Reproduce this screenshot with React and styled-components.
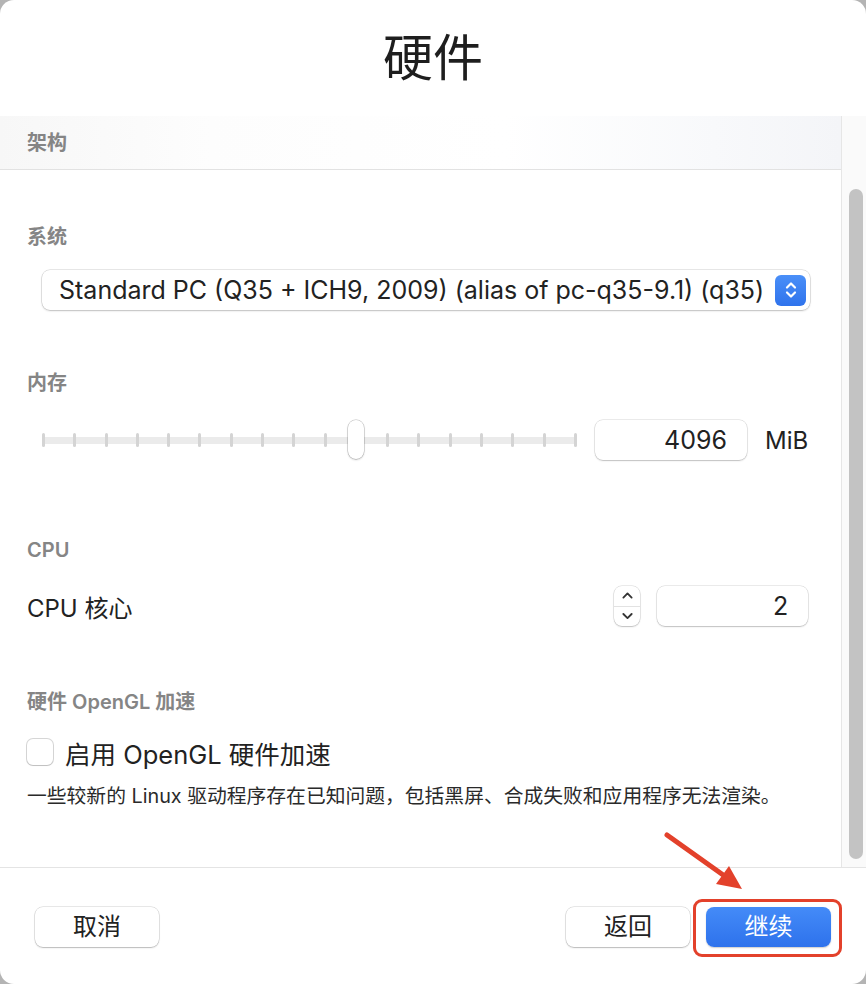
import React from "react";
import styled, { createGlobalStyle } from "styled-components";

const Global = createGlobalStyle`
  html, body { margin: 0; padding: 0; background: #b4b4b4; }
  body { font-family: "Inter", "Noto Sans CJK SC", sans-serif; color: #222; }
  * { box-sizing: border-box; }
`;

const Window = styled.div`
  position: relative;
  width: 866px;
  height: 984px;
  background: #fff;
  border-radius: 14px;
  overflow: hidden;
  display: flex;
  flex-direction: column;
`;

const TitleBar = styled.div`
  height: 116px;
  display: flex;
  align-items: center;
  justify-content: center;
  padding-bottom: 8px;
`;

const Title = styled.h1`
  margin: 0;
  font-family: "Noto Sans CJK SC", sans-serif;
  font-size: 50px;
  font-weight: 400;
  color: #1e1e1e;
  line-height: 1;
`;

const ScrollArea = styled.div`
  height: 752px;
  display: flex;
  border-bottom: 1px solid #e4e4e4;
`;

const Content = styled.div`
  flex: 1;
  display: flex;
  flex-direction: column;
`;

const Track = styled.div`
  width: 26px;
  border-left: 1px solid #e6e6e6;
  background: #fafafa;
  display: flex;
  flex-direction: column;
  padding: 73px 3px 8px 7px;
`;

const Thumb = styled.div`
  flex: 1;
  border-radius: 8px;
  background: #c3c3c3;
`;

const Band = styled.div`
  height: 54px;
  display: flex;
  align-items: center;
  padding-left: 27px;
  border-bottom: 1px solid #e2e2e2;
  background: linear-gradient(90deg, #f7f7f7 0%, #fdfdfd 25%, #ffffff 60%, #f8f9fb 85%, #f4f5f8 100%);
`;

const SectionLabel = styled.div`
  font-size: 20px;
  font-weight: 600;
  color: #858585;
  line-height: 28px;
  padding-left: ${(p) => (p.$inBand ? 0 : 27)}px;
  margin-top: ${(p) => p.$mt || 0}px;
`;

const Select = styled.div`
  margin: 19px 31px 0 42px;
  height: 40px;
  border-radius: 8px;
  background: #fff;
  box-shadow: 0 0 0 0.5px rgba(0,0,0,0.18), 0 1px 2px rgba(0,0,0,0.18);
  display: flex;
  align-items: center;
  justify-content: space-between;
  padding: 0 4px 0 17px;
  font-size: 25px;
  color: #222;
  white-space: nowrap;
`;

const BlueStepper = styled.div`
  width: 31px;
  height: 31px;
  border-radius: 6px;
  background: linear-gradient(#4a8ff8, #2f73ec);
  display: flex;
  align-items: center;
  justify-content: center;
`;

const Row = styled.div`
  display: flex;
  align-items: center;
  margin-top: ${(p) => p.$mt}px;
  padding-left: ${(p) => p.$pl}px;
  padding-right: 33px;
  height: 40px;
`;

const Slider = styled.div`
  position: relative;
  width: 535px;
  height: 40px;
  display: flex;
  align-items: center;
`;

const SliderTrack = styled.div`
  flex: 1;
  height: 7px;
  background: #ebebeb;
  border-radius: 3px;
  display: flex;
  justify-content: space-between;
  align-items: center;
`;

const Tick = styled.div`
  width: 3px;
  height: 14px;
  border-radius: 2px;
  background: #d4d4d4;
`;

const SliderThumb = styled.div`
  position: absolute;
  top: 0;
  width: 16px;
  height: 39px;
  border-radius: 8px;
  background: #fff;
  box-shadow: 0 0 0 0.5px rgba(0,0,0,0.25), 0 1px 2px rgba(0,0,0,0.2);
`;

const NumField = styled.div`
  width: ${(p) => p.$w}px;
  height: 40px;
  margin-left: ${(p) => p.$ml}px;
  border-radius: 8px;
  background: #fff;
  box-shadow: 0 0 0 0.5px rgba(0,0,0,0.16), 0 1px 1.5px rgba(0,0,0,0.18);
  display: flex;
  align-items: center;
  justify-content: flex-end;
  padding-right: 20px;
  font-size: 25px;
  color: #222;
`;

const Unit = styled.span`
  margin-left: 18px;
  font-size: 24px;
  color: #222;
`;

const RowLabel = styled.span`
  font-size: 24px;
  color: #222;
  margin-right: auto;
`;

const Stepper = styled.div`
  width: 26px;
  height: 40px;
  border-radius: 8px;
  background: #fff;
  box-shadow: 0 0 0 0.5px rgba(0,0,0,0.16), 0 1px 1.5px rgba(0,0,0,0.18);
  display: flex;
  flex-direction: column;
`;

const StepHalf = styled.div`
  flex: 1;
  display: flex;
  align-items: center;
  justify-content: center;
  border-top: ${(p) => (p.$divider ? "1px solid #e2e2e2" : "none")};
`;

const CheckRow = styled.label`
  display: flex;
  align-items: center;
  gap: 12px;
  margin-top: 20px;
  padding-left: 27px;
  height: 32px;
  font-size: 25.5px;
  color: #222;
`;

const Checkbox = styled.span`
  width: 26px;
  height: 26px;
  border-radius: 6px;
  background: #fff;
  box-shadow: 0 0 0 1px rgba(0,0,0,0.16), 0 1px 1px rgba(0,0,0,0.1);
`;

const Note = styled.p`
  margin: 15px 0 0;
  padding-left: 27px;
  font-size: 19.8px;
  line-height: 26px;
  color: #2a2a2a;
  white-space: nowrap;
`;

const Footer = styled.div`
  flex: 1;
  display: flex;
  align-items: flex-start;
  padding: 39px 35px 0 35px;
  gap: 16px;
`;

const Button = styled.button`
  width: ${(p) => p.$w || 124}px;
  height: 40px;
  border: none;
  border-radius: 8px;
  padding: 0 0 5px;
  font-family: "Noto Sans CJK SC", sans-serif;
  font-size: 24px;
  line-height: 1;
  cursor: pointer;
  background: ${(p) => (p.$primary ? "linear-gradient(#448bf8, #2e72ec)" : "#fff")};
  color: ${(p) => (p.$primary ? "#fff" : "#222")};
  box-shadow: ${(p) =>
    p.$primary
      ? "0 1px 1.5px rgba(0,0,0,0.2)"
      : "0 0 0 0.5px rgba(0,0,0,0.18), 0 1px 1.5px rgba(0,0,0,0.2)"};
  margin-left: ${(p) => (p.$pushRight ? "auto" : "0")};
`;

const Highlight = styled.span`
  position: relative;
  display: inline-flex;
  &::after {
    content: "";
    position: absolute;
    left: -13px;
    right: -11px;
    top: -8px;
    bottom: -10px;
    border: 3.5px solid #e3412b;
    border-radius: 9px;
    pointer-events: none;
  }
`;

const ArrowOverlay = styled.svg`
  position: absolute;
  left: 0;
  top: 0;
  pointer-events: none;
`;

const Chevron = ({ dir = "up", color = "#fff", w = 12 }) => (
  <svg width={w} height={w * 0.6} viewBox="0 0 12 7">
    <path
      d={dir === "up" ? "M1.5 6 L6 1.5 L10.5 6" : "M1.5 1 L6 5.5 L10.5 1"}
      fill="none"
      stroke={color}
      strokeWidth="2"
      strokeLinecap="round"
      strokeLinejoin="round"
    />
  </svg>
);

export default function App() {
  const ticks = Array.from({ length: 18 });
  return (
    <>
      <Global />
      <Window>
        <TitleBar>
          <Title>硬件</Title>
        </TitleBar>
        <ScrollArea>
          <Content>
            <Band>
              <SectionLabel $inBand>架构</SectionLabel>
            </Band>
            <SectionLabel $mt={53}>系统</SectionLabel>
            <Select>
              <span>Standard PC (Q35 + ICH9, 2009) (alias of pc-q35-9.1) (q35)</span>
              <BlueStepper>
                <svg width="14" height="20" viewBox="0 0 14 20">
                  <path d="M3 7.5 L7 3.5 L11 7.5 M3 12.5 L7 16.5 L11 12.5" fill="none" stroke="#fff" strokeWidth="2.2" strokeLinecap="round" strokeLinejoin="round" />
                </svg>
              </BlueStepper>
            </Select>
            <SectionLabel $mt={59}>内存</SectionLabel>
            <Row $mt={23} $pl={42}>
              <Slider>
                <SliderTrack>
                  {ticks.map((_, i) => (
                    <Tick key={i} />
                  ))}
                </SliderTrack>
                <SliderThumb style={{ left: 306 }} />
              </Slider>
              <NumField $w={152} $ml={18}>4096</NumField>
              <Unit>MiB</Unit>
            </Row>
            <SectionLabel $mt={76}>CPU</SectionLabel>
            <Row $mt={22} $pl={27}>
              <RowLabel>CPU 核心</RowLabel>
              <Stepper>
                <StepHalf>
                  <Chevron dir="up" color="#333" w={11} />
                </StepHalf>
                <StepHalf $divider>
                  <Chevron dir="down" color="#333" w={11} />
                </StepHalf>
              </Stepper>
              <NumField $w={151} $ml={17}>2</NumField>
            </Row>
            <SectionLabel $mt={62}>硬件 OpenGL 加速</SectionLabel>
            <CheckRow>
              <Checkbox />
              启用 OpenGL 硬件加速
            </CheckRow>
            <Note>一些较新的 Linux 驱动程序存在已知问题，包括黑屏、合成失败和应用程序无法渲染。</Note>
          </Content>
          <Track>
            <Thumb />
          </Track>
        </ScrollArea>
        <Footer>
          <Button>取消</Button>
          <Button $pushRight>返回</Button>
          <Highlight>
            <Button $primary $w={125}>继续</Button>
          </Highlight>
        </Footer>
        <ArrowOverlay width="866" height="984" viewBox="0 0 866 984">
          <line x1="667" y1="835" x2="726" y2="877" stroke="#e3412b" strokeWidth="5" strokeLinecap="round" />
          <polygon points="742,889 716,884 729,866" fill="#e3412b" />
        </ArrowOverlay>
      </Window>
    </>
  );
}
